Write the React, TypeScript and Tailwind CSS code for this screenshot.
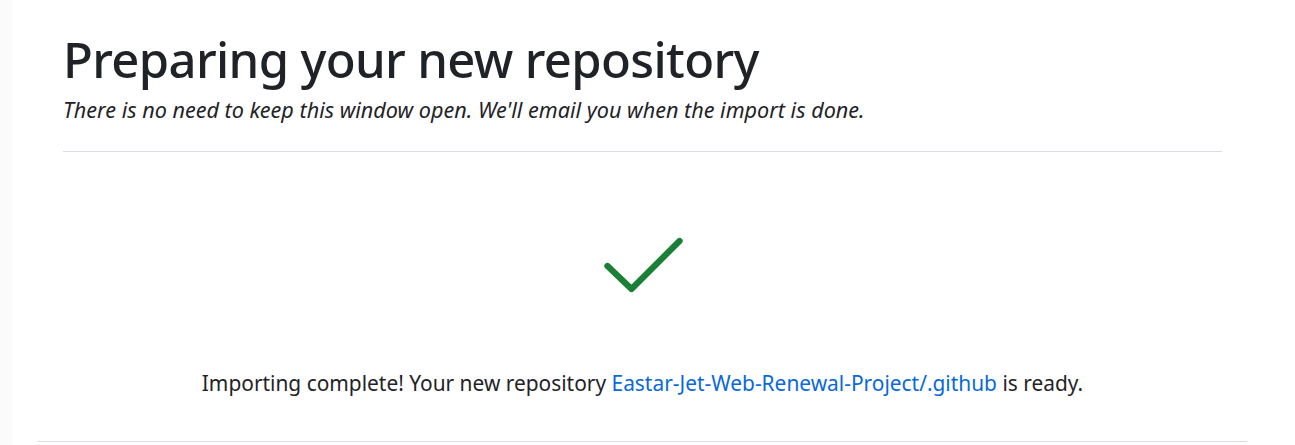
export default function App() {
  return (
    <div className="relative w-[1295px] h-[445px] overflow-hidden bg-white text-[#1f2328] font-['Noto_Sans','Open_Sans',sans-serif]">
      <div className="absolute left-0 top-0 h-full w-3 bg-[#fbfbfb]" />
      <div className="w-[1285px] px-[38px]">
        <div className="border-b border-[#d8dee4] h-[442px] px-[25px]">
          <div className="pt-[29px] pb-[26px] border-b border-[#d8dee4]">
            <h1 className="text-[49px] leading-[60px] font-medium tracking-[-0.65px]">Preparing your new repository</h1>
            <p className="italic text-[21.6px] leading-[30px] mt-[6px]">
              There is no need to keep this window open. We'll email you when the import is done.
            </p>
          </div>

          <div className="flex justify-center pt-[84px]">
            <svg width="84" height="60" viewBox="0 0 84 60" className="ml-[2px]">
              <polyline
                points="5.5,30 29.5,53 77.5,5"
                fill="none"
                stroke="#1a7f37"
                strokeWidth="6.3"
                strokeLinecap="round"
                strokeLinejoin="round"
              />
            </svg>
          </div>

          <p className="text-center text-[20.9px] leading-[30px] mt-[72px]">
            Importing complete! Your new repository{' '}
            <a href="#" className="text-[#0969da]">Eastar-Jet-Web-Renewal-Project/.github</a> is ready.
          </p>
        </div>
      </div>
    </div>
  );
}
